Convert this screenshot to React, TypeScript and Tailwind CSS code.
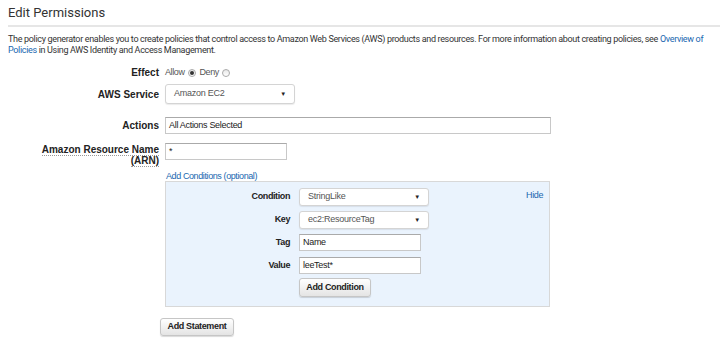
import React from 'react';

const label = 'text-right font-bold text-[10px] text-[#222] [font-family:"Liberation_Sans",Arial,sans-serif]';
const innerLabel = 'text-right font-bold text-[9px] tracking-[-0.4px] text-[#222]';

function Select({ value, width }: { value: string; width: string }) {
  return (
    <div
      className={`${width} flex items-center justify-between rounded-[3px] border border-[#d4d4d4] bg-white pl-2 pr-2 text-[9px] tracking-[-0.25px] text-[#555] shadow-[0_1px_1px_rgba(0,0,0,0.08)]`}
    >
      <span>{value}</span>
      <span className="text-[6px] text-[#222]">▼</span>
    </div>
  );
}

function TextBox({ value, width, height = 'h-[17px]' }: { value: string; width: string; height?: string }) {
  return (
    <div
      className={`${width} ${height} flex items-center border border-[#c8c8c8] border-t-[#aaa] bg-white pl-[3px] text-[9px] tracking-[-0.3px] text-[#222]`}
    >
      {value}
    </div>
  );
}

function Button({ children, className = '' }: { children: React.ReactNode; className?: string }) {
  return (
    <div
      className={`${className} flex items-center justify-center rounded-[3px] border border-[#c6c6c6] bg-gradient-to-b from-white to-[#e4e4e4] text-[9px] font-bold tracking-[-0.35px] text-[#222] shadow-[0_1px_1px_rgba(0,0,0,0.15)]`}
    >
      {children}
    </div>
  );
}

function Radio({ checked }: { checked?: boolean }) {
  return (
    <span className="inline-flex h-[8px] w-[8px] items-center justify-center rounded-full border border-[#aaa] bg-gradient-to-b from-[#e8e8e8] to-white">
      {checked && <span className="h-[4px] w-[4px] rounded-full bg-[#333]" />}
    </span>
  );
}

export default function App() {
  return (
    <div className="h-[356px] w-[720px] bg-white text-[#333] [font-family:'Liberation_Sans',Arial,sans-serif]">
      <div className="pl-2 pt-[5px]">
        <h1 className="pb-[4px] text-[13px] leading-[16px] text-[#333] [font-family:Roboto,sans-serif]">Edit Permissions</h1>
        <div className="h-[2px] bg-[#e6e6e6]" />
        <div className="mt-[7px] flex flex-col text-[9px] leading-[11px] tracking-[-0.33px] text-[#333] [font-family:Roboto,sans-serif]">
          <div className="whitespace-nowrap">
            <span>
              The policy generator enables you to create policies that control access to Amazon Web Services (AWS)
              products and resources. For more information about creating policies, see{' '}
            </span>
            <span className="text-[#2067b0]">Overview of</span>
          </div>
          <div className="whitespace-nowrap">
            <span className="text-[#2067b0]">Policies</span>
            <span> in Using AWS Identity and Access Management.</span>
          </div>
        </div>
      </div>

      <div className="mt-[9px] flex flex-col">
        <div className="flex items-center gap-[6px]">
          <div className={`${label} w-[159px]`}>Effect</div>
          <div className="flex items-center gap-[3px] text-[9px] tracking-[-0.4px] text-[#555]">
            <span>Allow</span>
            <Radio checked />
            <span className="ml-[1px]">Deny</span>
            <Radio />
          </div>
        </div>

        <div className="mt-[4px] flex items-center gap-[6px]">
          <div className={`${label} w-[159px]`}>AWS Service</div>
          <Select value="Amazon EC2" width="w-[130px] h-[20px]" />
        </div>

        <div className="mt-[13px] flex items-center gap-[6px]">
          <div className={`${label} w-[159px]`}>Actions</div>
          <TextBox value="All Actions Selected" width="w-[386px]" />
        </div>

        <div className="mt-[9px] flex items-start gap-[6px]">
          <div className={`${label} w-[159px] pt-[1px] leading-[11px]`}>
            <span className="border-b border-dotted border-[#999]">Amazon Resource Name</span>
            <br />
            <span className="border-b border-dotted border-[#999]">(ARN)</span>
          </div>
          <TextBox value="*" width="w-[122px]" />
        </div>

        <div className="ml-[166px] mt-[5px] text-[9px] leading-[11px] tracking-[-0.4px] text-[#2067b0]">
          Add Conditions (optional)
        </div>

        <div className="ml-[165px] mt-[-1px] h-[126px] w-[385px] border border-[#d8d8d8] bg-[#eaf3fd] pt-[6px]">
          <div className="flex">
            <div className="flex flex-col">
              <div className="flex items-center gap-[9px]">
                <div className={`${innerLabel} w-[124px]`}>Condition</div>
                <Select value="StringLike" width="w-[130px] h-[18px]" />
              </div>
              <div className="mt-[5px] flex items-center gap-[9px]">
                <div className={`${innerLabel} w-[124px]`}>Key</div>
                <Select value="ec2:ResourceTag" width="w-[130px] h-[18px]" />
              </div>
              <div className="mt-[5px] flex items-center gap-[9px]">
                <div className={`${innerLabel} w-[124px]`}>Tag</div>
                <TextBox value="Name" width="w-[122px]" height="h-[17px]" />
              </div>
              <div className="mt-[6px] flex items-center gap-[9px]">
                <div className={`${innerLabel} w-[124px]`}>Value</div>
                <TextBox value="leeTest*" width="w-[122px]" height="h-[17px]" />
              </div>
              <div className="ml-[133px] mt-[4px]">
                <Button className="h-[19px] w-[72px]">Add Condition</Button>
              </div>
            </div>
            <div className="ml-auto pr-[6px] pt-[1px] text-[9px] tracking-[-0.4px] text-[#2067b0]">Hide</div>
          </div>
        </div>

        <div className="ml-[160px] mt-[11px]">
          <Button className="h-[18px] w-[74px]">Add Statement</Button>
        </div>
      </div>
    </div>
  );
}
